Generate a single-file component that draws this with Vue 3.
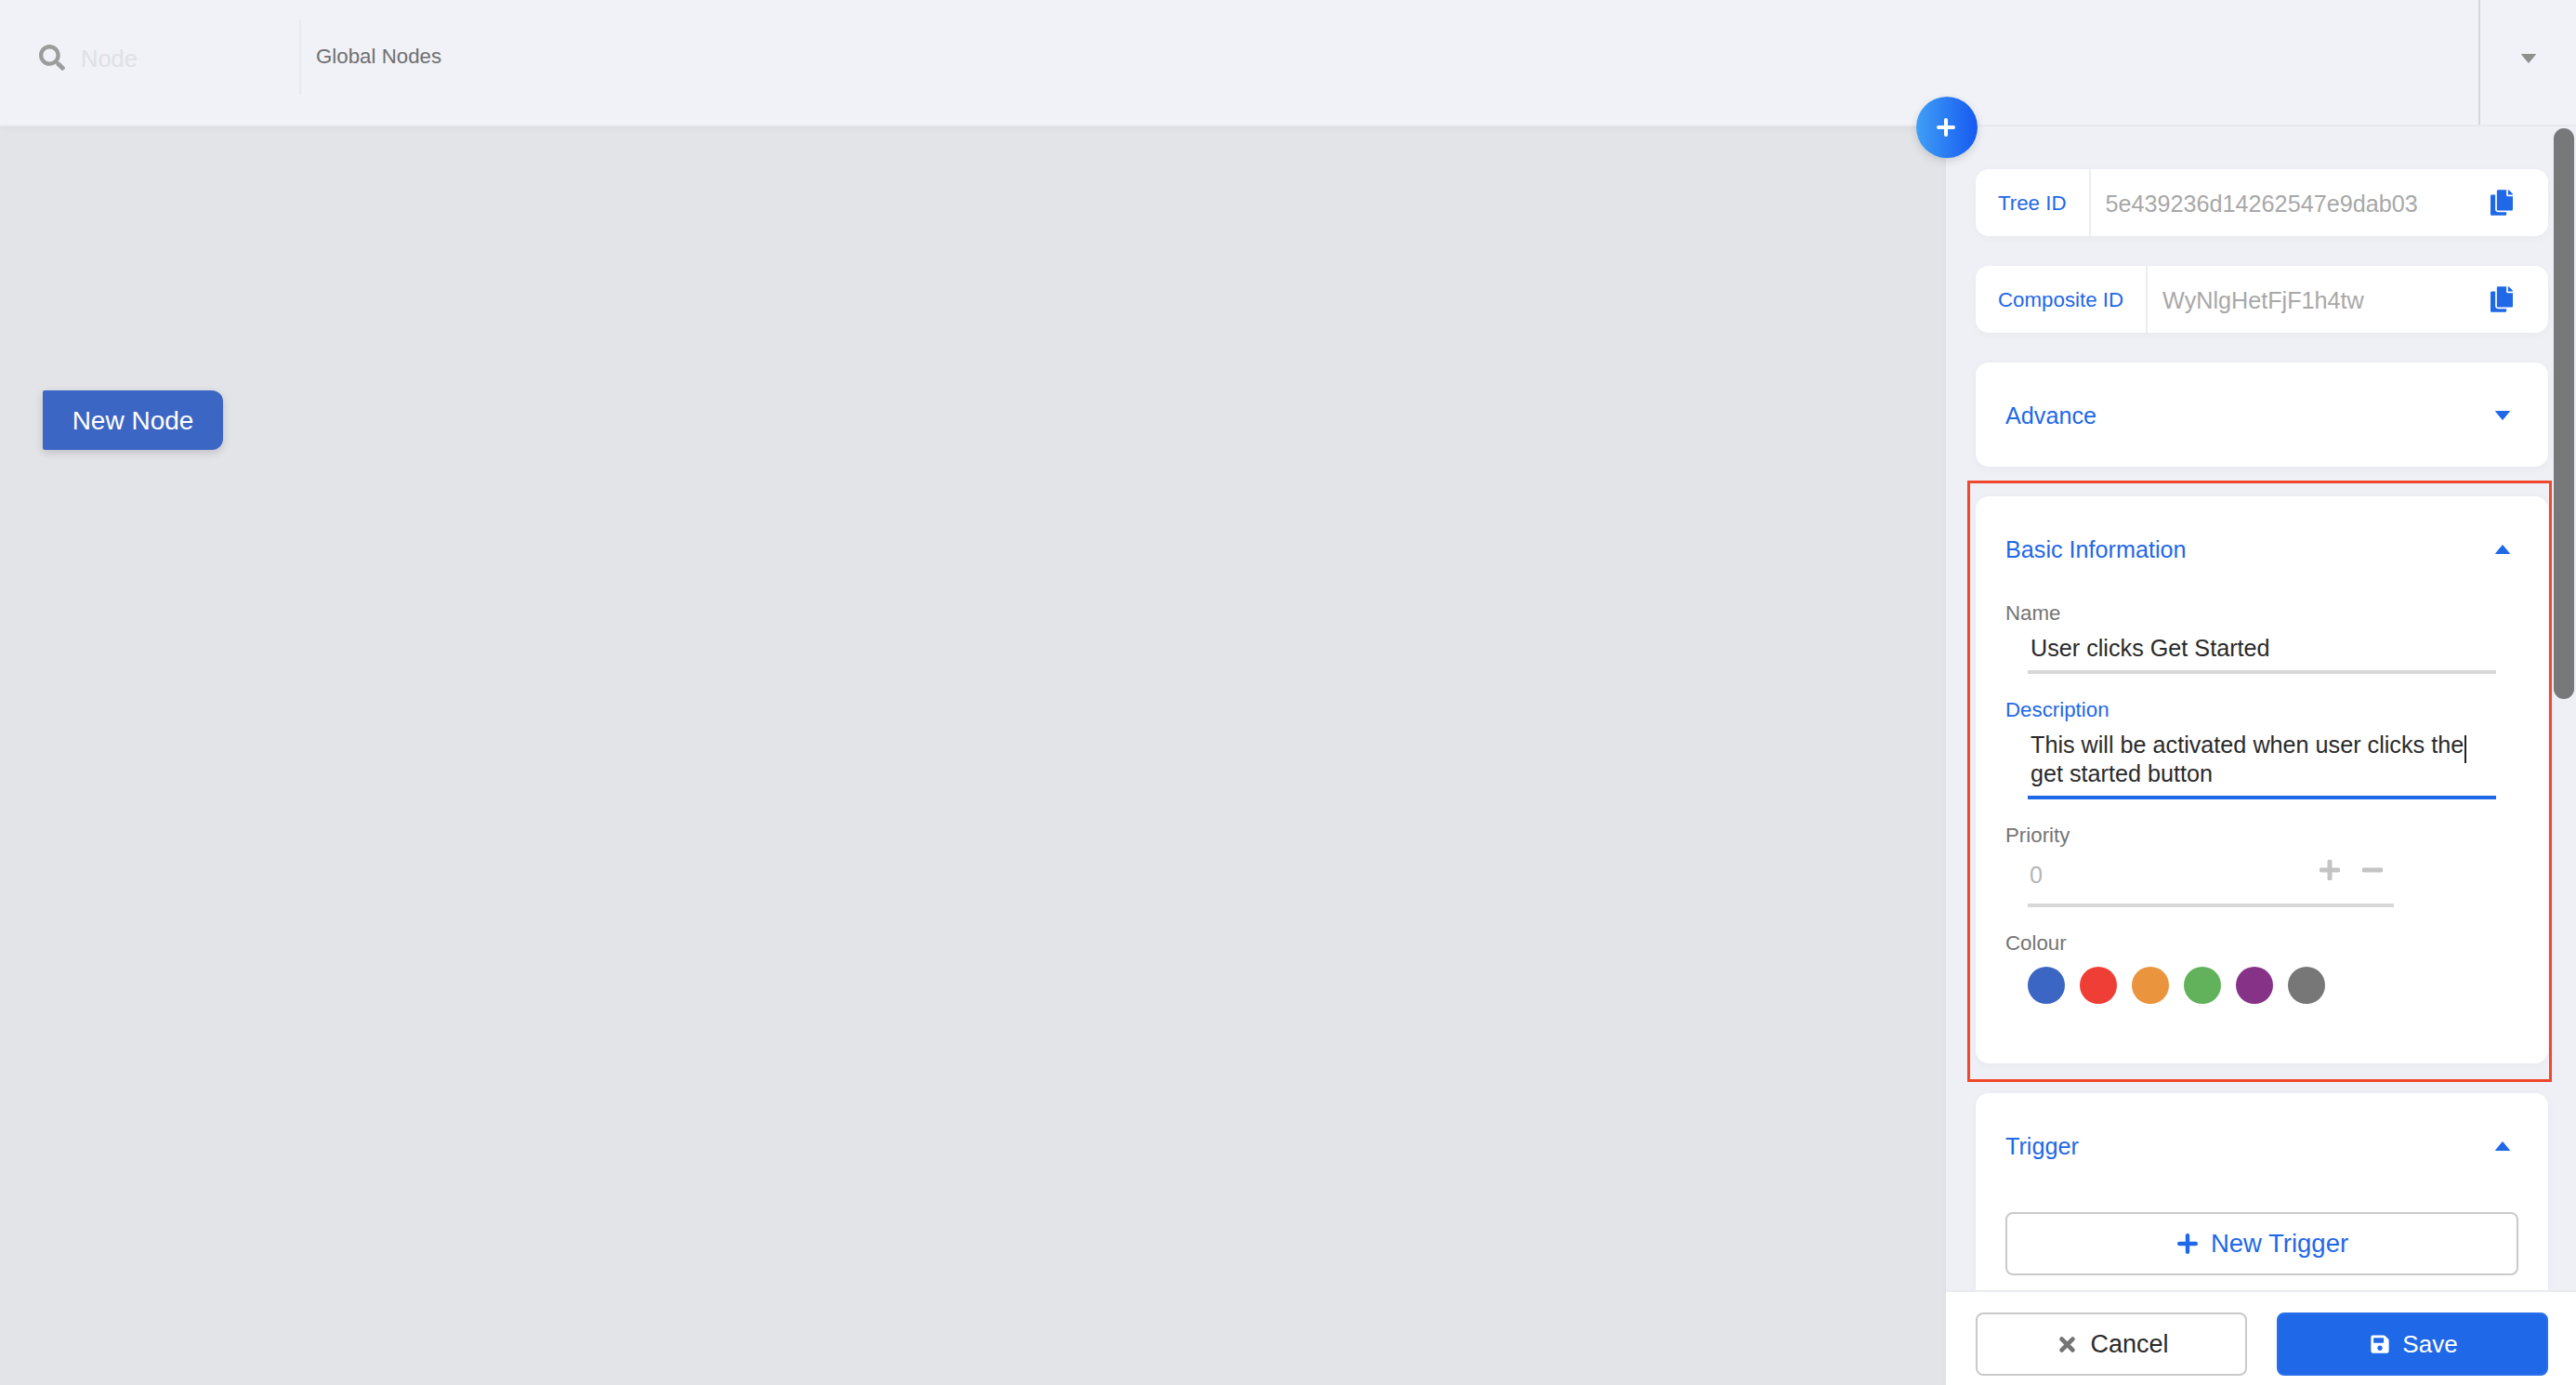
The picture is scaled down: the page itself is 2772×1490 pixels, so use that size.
<template>
  <div class="page">
    <header class="topbar">
      <div class="search">
        <svg class="search-icon" viewBox="0 0 512 512">
          <path d="M505 442.7L405.3 343c-4.5-4.5-10.6-7-17-7H372c27.6-35.3 44-79.7 44-128C416 93.1 322.9 0 208 0S0 93.1 0 208s93.1 208 208 208c48.3 0 92.7-16.4 128-44v16.3c0 6.4 2.5 12.5 7 17l99.7 99.7c9.4 9.4 24.6 9.4 33.9 0l28.3-28.3c9.4-9.4 9.4-24.6.1-34zM208 336c-70.7 0-128-57.2-128-128 0-70.7 57.2-128 128-128 70.7 0 128 57.2 128 128 0 70.7-57.2 128-128 128z" />
        </svg>
        <span class="search-text">Node</span>
      </div>
      <div class="global">Global Nodes</div>
      <div class="topbar-menu">
        <svg class="caret grey" viewBox="0 0 16 10"><path d="M.5 .5h15l-7.5 9z" /></svg>
      </div>
    </header>

    <main class="main">
      <section class="canvas">
        <button class="new-node">New Node</button>
      </section>

      <aside class="panel">
        <button class="fab">
          <svg viewBox="0 0 20 20"><path d="M10 2v16M2 10h16" /></svg>
        </button>

        <div class="panel-scroll">
          <div v-for="row in idRows" :key="row.label" class="id-card">
            <div class="id-label">{{ row.label }}</div>
            <div class="id-value">{{ row.value }}</div>
            <svg class="copy" viewBox="0 0 448 512">
              <path d="M320 448v40c0 13.255-10.745 24-24 24H24c-13.255 0-24-10.745-24-24V120c0-13.255 10.745-24 24-24h72v296c0 30.879 25.121 56 56 56h168zm0-344V0H152c-13.255 0-24 10.745-24 24v368c0 13.255 10.745 24 24 24h272c13.255 0 24-10.745 24-24V128H344c-13.2 0-24-10.8-24-24zm120.971-31.029L375.029 7.029A24 24 0 0 0 358.059 0H352v96h96v-6.059a24 24 0 0 0-7.029-16.97z" />
            </svg>
          </div>

          <div class="card">
            <div class="card-head">
              <span>Advance</span>
              <svg class="caret" viewBox="0 0 16 10"><path d="M.5 .5h15l-7.5 9z" /></svg>
            </div>
          </div>

          <div class="card basic">
            <div class="highlight"></div>
            <div class="card-head">
              <span>Basic Information</span>
              <svg class="caret" viewBox="0 0 16 10"><path d="M.5 9.5h15L8 .5z" /></svg>
            </div>

            <div class="field-label">Name</div>
            <div class="field">User clicks Get Started</div>

            <div class="field-label spaced active">Description</div>
            <div class="field focused">
              This will be activated when user clicks the<span class="cursor"></span><br />get started button
            </div>

            <div class="field-label spaced">Priority</div>
            <div class="field number">
              <span class="number-value">0</span>
              <svg class="step" viewBox="0 0 22 22"><path d="M11 2v18M2 11h18" /></svg>
              <svg class="step" viewBox="0 0 22 22"><path d="M2 11h18" /></svg>
            </div>

            <div class="field-label spaced">Colour</div>
            <div class="swatches">
              <span
                v-for="colour in colours"
                :key="colour"
                class="swatch"
                :style="{ background: colour }"
              ></span>
            </div>
          </div>

          <div class="card trigger">
            <div class="card-head">
              <span>Trigger</span>
              <svg class="caret" viewBox="0 0 16 10"><path d="M.5 9.5h15L8 .5z" /></svg>
            </div>
            <button class="new-trigger">
              <svg viewBox="0 0 20 20"><path d="M10 2v16M2 10h16" /></svg>
              New Trigger
            </button>
          </div>
        </div>

        <footer class="panel-footer">
          <button class="btn cancel">
            <svg viewBox="0 0 16 16"><path d="M2.5 2.5l11 11M13.5 2.5l-11 11" /></svg>
            Cancel
          </button>
          <button class="btn save">
            <svg viewBox="0 0 448 512">
              <path d="M433.941 129.941l-83.882-83.882A48 48 0 0 0 316.118 32H48C21.49 32 0 53.49 0 80v352c0 26.51 21.49 48 48 48h352c26.51 0 48-21.49 48-48V163.882a48 48 0 0 0-14.059-33.941zM224 416c-35.346 0-64-28.654-64-64 0-35.346 28.654-64 64-64s64 28.654 64 64c0 35.346-28.654 64-64 64zm96-304.52V212c0 6.627-5.373 12-12 12H76c-6.627 0-12-5.373-12-12V108c0-6.627 5.373-12 12-12h228.52c3.183 0 6.235 1.264 8.485 3.515l3.48 3.48A11.996 11.996 0 0 1 320 111.48z" />
            </svg>
            Save
          </button>
        </footer>

        <div class="scrollbar"></div>
      </aside>
    </main>
  </div>
</template>

<script setup>
const idRows = [
  { label: "Tree ID", value: "5e439236d14262547e9dab03" },
  { label: "Composite ID", value: "WyNlgHetFjF1h4tw" },
]

const colours = ["#3c66c4", "#ef3e36", "#ea943d", "#62b15b", "#863387", "#777777"]
</script>

<style>
body {
  margin: 0;
}
</style>

<style scoped>
.page {
  width: 2772px;
  height: 1490px;
  display: flex;
  flex-direction: column;
  overflow: hidden;
  font-family: "Liberation Sans", Arial, sans-serif;
  background: #e3e4e8;
}

button {
  font-family: inherit;
  cursor: pointer;
}

.topbar {
  position: relative;
  z-index: 1;
  flex: none;
  height: 136px;
  box-sizing: border-box;
  display: flex;
  align-items: flex-start;
  background: #f0f2f7;
  border-bottom: 2px solid #eaebef;
  box-shadow: 0 2px 8px rgba(0, 0, 0, 0.04);
}

.search {
  width: 324px;
  height: 80px;
  margin-top: 22px;
  box-sizing: border-box;
  padding-left: 42px;
  display: flex;
  align-items: center;
  gap: 17px;
  border-right: 2px solid #e8e9ed;
}

.search-icon {
  width: 28px;
  height: 28px;
  fill: #9c9c9c;
}

.search-text {
  padding-top: 2px;
  font-size: 25.5px;
  color: #dfe0e4;
}

.global {
  margin-top: 48px;
  padding-left: 16px;
  font-size: 22.3px;
  line-height: 26px;
  color: #707070;
}

.topbar-menu {
  margin-left: auto;
  width: 105px;
  height: 134px;
  box-sizing: border-box;
  padding: 58px 0 0 44px;
  border-left: 2px solid #d6d7db;
}

.caret {
  display: block;
  flex: none;
  width: 16px;
  height: 10px;
  fill: #1f68e8;
  stroke: #1f68e8;
  stroke-width: 1;
  stroke-linejoin: round;
}

.caret.grey {
  fill: #8f8f8f;
  stroke: #8f8f8f;
}

.main {
  flex: 1;
  min-height: 0;
  display: flex;
}

.canvas {
  flex: 1;
  box-sizing: border-box;
  padding: 284px 0 0 46px;
}

.new-node {
  display: block;
  width: 194px;
  height: 64px;
  padding: 2px 0 0;
  border: none;
  border-radius: 2px 12px 12px 2px;
  background: #3c66c4;
  color: #fff;
  font-size: 28px;
  box-shadow: 0 3px 8px rgba(0, 0, 0, 0.16);
}

.panel {
  position: relative;
  z-index: 2;
  flex: none;
  width: 678px;
  display: flex;
  flex-direction: column;
  background: #eef0f5;
  box-shadow: -2px 0 6px rgba(0, 0, 0, 0.02);
}

.fab {
  position: absolute;
  top: -32px;
  left: -32px;
  width: 66px;
  height: 66px;
  padding: 0;
  border: none;
  border-radius: 50%;
  background: linear-gradient(90deg, #409ff5, #1659f1);
  box-shadow: 0 3px 10px rgba(0, 0, 0, 0.14);
  display: flex;
  align-items: center;
  justify-content: center;
}

.fab svg {
  width: 20px;
  height: 20px;
  margin-left: -2px;
  fill: none;
  stroke: #fff;
  stroke-width: 4;
  stroke-linecap: round;
}

.panel-scroll {
  flex: 1;
  min-height: 0;
  overflow: hidden;
  padding: 46px 30px 0 32px;
  display: flex;
  flex-direction: column;
  gap: 32px;
}

.id-card {
  flex: none;
  height: 72px;
  display: flex;
  align-items: center;
  background: #fff;
  border-radius: 14px;
  box-shadow: 0 2px 10px rgba(30, 40, 80, 0.03);
}

.id-label {
  height: 100%;
  box-sizing: border-box;
  display: flex;
  align-items: center;
  padding: 2px 24px 0;
  border-right: 2px solid #eceded;
  font-size: 22.3px;
  color: #1f68e8;
}

.id-value {
  flex: 1;
  padding: 2px 0 0 16px;
  font-size: 25.2px;
  color: #a8a8a8;
}

.copy {
  width: 24px;
  height: 28px;
  margin-right: 38px;
  fill: #1f68e8;
}

.card {
  position: relative;
  flex: none;
  padding: 0 32px;
  background: #fff;
  border-radius: 14px;
  box-shadow: 0 2px 10px rgba(30, 40, 80, 0.04);
}

.card.basic {
  padding-bottom: 64px;
}

.card-head {
  height: 112px;
  box-sizing: border-box;
  display: flex;
  align-items: center;
  justify-content: space-between;
  padding: 2px 9px 0 0;
  font-size: 25.2px;
  color: #1f68e8;
}

.highlight {
  position: absolute;
  top: -17px;
  left: -9px;
  right: -4px;
  bottom: -20px;
  border: 3px solid #f1472d;
  pointer-events: none;
}

.field-label {
  height: 26px;
  font-size: 22.3px;
  line-height: 28px;
  color: #757575;
}

.field-label.spaced {
  margin-top: 25px;
}

.field-label.active {
  color: #1f68e8;
}

.field {
  margin: 0 24px;
  padding: 10px 3px 9px;
  font-size: 25.2px;
  line-height: 30px;
  color: #2a2a2a;
  border-bottom: 4px solid #d8d8d8;
}

.field.focused {
  padding: 11px 3px 9px;
  line-height: 29px;
  border-bottom-color: #1f68e8;
}

.cursor {
  display: inline-block;
  width: 2px;
  height: 30px;
  margin: -3px 0 -3px 1px;
  vertical-align: -8px;
  background: #222;
}

.field.number {
  width: 394px;
  box-sizing: border-box;
  display: flex;
  align-items: flex-start;
  gap: 24px;
  padding: 15px 12px 16px 2px;
  color: #b5b5b5;
}

.number-value {
  flex: 1;
}

.step {
  width: 22px;
  height: 22px;
  margin-top: -1px;
  fill: none;
  stroke: #c4c4c4;
  stroke-width: 5;
  stroke-linecap: round;
}

.swatches {
  margin: 13px 0 0 24px;
  display: flex;
  gap: 16px;
}

.swatch {
  width: 40px;
  height: 40px;
  border-radius: 50%;
}

.new-trigger {
  width: 100%;
  height: 68px;
  margin-top: 16px;
  margin-bottom: 40px;
  padding: 0 0 0 2px;
  border: 2px solid #cacaca;
  border-radius: 8px;
  background: #fff;
  color: #1f68e8;
  font-size: 27.5px;
  display: flex;
  align-items: center;
  justify-content: center;
  gap: 14px;
}

.new-trigger svg {
  width: 22px;
  height: 22px;
  fill: none;
  stroke: #1f68e8;
  stroke-width: 4;
  stroke-linecap: round;
}

.panel-footer {
  flex: none;
  position: relative;
  height: 102px;
  box-sizing: border-box;
  display: flex;
  gap: 32px;
  padding: 22px 30px 0 32px;
  background: #fff;
  border-top: 2px solid #e9ebef;
}

.btn {
  flex: none;
  width: 292px;
  height: 68px;
  border-radius: 8px;
  font-size: 27px;
  display: flex;
  align-items: center;
  justify-content: center;
}

.btn.cancel {
  gap: 16px;
  padding: 0 0 0 6px;
  background: #fff;
  border: 2px solid #cacaca;
  color: #2a2a2a;
}

.btn.cancel svg {
  width: 17px;
  height: 17px;
  fill: none;
  stroke: #757575;
  stroke-width: 4.5;
  stroke-linecap: round;
}

.btn.save {
  gap: 14px;
  padding: 0 0 0 4px;
  background: #1f68e8;
  border: 2px solid #2a70ea;
  color: #fff;
  font-size: 26px;
}

.btn.save svg {
  width: 20px;
  height: 22px;
  fill: #fff;
}

.scrollbar {
  position: absolute;
  top: 2px;
  right: 2px;
  width: 22px;
  height: 614px;
  border-radius: 11px;
  background: #77787a;
}
</style>
